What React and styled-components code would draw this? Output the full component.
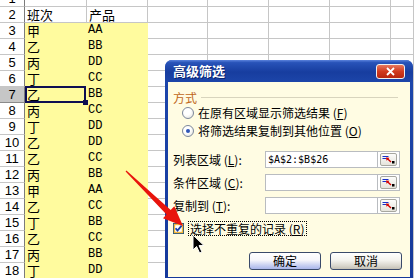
import styled, { createGlobalStyle } from "styled-components";

const GlobalStyle = createGlobalStyle`
	html, body {
		margin: 0;
		padding: 0;
		background: #fff;
		overflow: hidden;
	}
`;

const CJK = `"Noto Sans CJK SC", "Liberation Sans", sans-serif`;

const Page = styled.div`
	position: relative;
	width: 414px;
	height: 278px;
	overflow: hidden;
	background: #fff;
`;

const Sheet = styled.div`
	display: grid;
	grid-template-columns: 25px 62px 61px 60px 61px 61px 61px 1fr;
	grid-auto-rows: 16px;
	margin-top: -9px;
`;

const RowHead = styled.div`
	box-sizing: border-box;
	border-right: 1px solid #7b7b7b;
	border-bottom: 1px solid ${(p) => (p.$active ? "#8a8a8a" : "#c6c6c6")};
	background: ${(p) => (p.$active ? "#c6c6c6" : "#fff")};
	font: 13px/15px "Liberation Sans", sans-serif;
	text-align: center;
	color: #000;
`;

const Cell = styled.div`
	box-sizing: border-box;
	position: relative;
	overflow: visible;
	border-right: 1px solid ${(p) => (p.$fill ? "#fffb9e" : "#c6c6c6")};
	border-bottom: 1px solid ${(p) => (p.$fill ? "#fffb9e" : "#c6c6c6")};
	background: ${(p) => (p.$fill ? "#fffb9e" : "#fff")};
	padding-left: ${(p) => (p.$latin ? "1px" : "2px")};
	white-space: nowrap;
	color: #000;
	font: ${(p) =>
		p.$latin
			? `12px/15px "Liberation Mono", monospace`
			: `13px/15px ${CJK}`};

	${(p) =>
		p.$active &&
		`
		&::after {
			content: "";
			position: absolute;
			top: -1px;
			left: 0;
			right: 0;
			bottom: -1px;
			border: 2px solid #0e0e52;
		}
		&::before {
			content: "";
			position: absolute;
			right: -2px;
			bottom: -3px;
			width: 5px;
			height: 5px;
			background: #0e0e52;
			z-index: 1;
		}
	`}
`;

const Dialog = styled.div`
	position: absolute;
	left: 165px;
	top: 60px;
	width: 248px;
	height: 220px;
	box-sizing: border-box;
	display: flex;
	flex-direction: column;
	padding: 0 3px 3px;
	background: linear-gradient(#1d47ad, #15389a);
	border-radius: 7px 7px 0 0;
	z-index: 5;
`;

const TitleBar = styled.div`
	height: 22px;
	display: flex;
	align-items: center;
	justify-content: space-between;
	margin: 0 -3px;
	padding: 0 8px;
	border-radius: 7px 7px 0 0;
	background: linear-gradient(
		#5a82dc 0%,
		#2853b8 12%,
		#173d9f 55%,
		#1c45a9 100%
	);
`;

const Title = styled.span`
	font: bold 13px/16px ${CJK};
	color: #fff;
	text-shadow: 1px 1px 0 #0b2470;
`;

const CloseButton = styled.div`
	width: 29px;
	height: 15px;
	box-sizing: border-box;
	border: 1px solid #f0f0f0;
	border-radius: 3px;
	background: linear-gradient(#e8785e, #d13a1e 50%, #b8260f);
	display: flex;
	align-items: center;
	justify-content: center;
`;

const Body = styled.div`
	flex: 1;
	background: #fffce3;
	padding: 9px 0 0 5px;
	display: flex;
	flex-direction: column;
	font: 12px/14px ${CJK};
	color: #000;
`;

const GroupHead = styled.div`
	display: flex;
	align-items: center;
	height: 13px;
	padding-right: 12px;
	color: #c0661a;

	&::after {
		content: "";
		flex: 1;
		height: 1px;
		margin-left: 4px;
		background: #d8d4bd;
	}
`;

const RadioRow = styled.div`
	display: flex;
	align-items: center;
	gap: 4px;
	height: 18px;
	padding-left: 9px;
`;

const Radio = styled.span`
	width: 12px;
	height: 12px;
	box-sizing: border-box;
	border-radius: 50%;
	border: 1px solid #7c879b;
	background: radial-gradient(circle at 40% 35%, #fff 40%, #dcdcd4 100%);
	display: flex;
	align-items: center;
	justify-content: center;

	&::after {
		content: "";
		width: 4px;
		height: 4px;
		border-radius: 50%;
		background: ${(p) => (p.$checked ? "#2f55b6" : "transparent")};
	}
`;

const Fields = styled.div`
	display: flex;
	flex-direction: column;
	gap: 6px;
	margin-top: 11px;
`;

const FieldRow = styled.div`
	display: flex;
	align-items: center;
	height: 17px;
`;

const FieldLabel = styled.span`
	width: 92px;
	white-space: nowrap;
`;

const Input = styled.div`
	width: 113px;
	height: 17px;
	box-sizing: border-box;
	border: 1px solid #b9bcc0;
	background: #fff;
	padding-left: 2px;
	font: 10px/15px "DejaVu Sans Mono", monospace;
`;

const RefButton = styled.div`
	width: 22px;
	height: 17px;
	box-sizing: border-box;
	border: 1px solid #b9bcc0;
	border-left: none;
	background: #fff;
	display: flex;
	align-items: center;
	justify-content: center;

	& > span {
		width: 17px;
		height: 13px;
		box-sizing: border-box;
		border: 1px solid #a7a79f;
		border-radius: 2px;
		background: linear-gradient(#fdfdfb, #e6e4dc);
		display: flex;
		align-items: center;
		justify-content: center;
	}
`;

const CheckRow = styled.div`
	display: flex;
	align-items: center;
	gap: 4px;
	height: 16px;
	margin-top: 6px;
`;

const CheckLabel = styled.span`
	border: 1px dotted #000;
	padding: 0 2px 0 1px;
	line-height: 13px;
	white-space: nowrap;
`;

const Buttons = styled.div`
	display: flex;
	justify-content: flex-end;
	gap: 9px;
	margin-top: 16px;
	padding-right: 8px;
`;

const Button = styled.div`
	width: 72px;
	height: 18px;
	box-sizing: border-box;
	border: 1px solid #3a4a6a;
	border-radius: 3px;
	display: flex;
	align-items: center;
	justify-content: center;
	background: ${(p) =>
		p.$default
			? "linear-gradient(#ffffff 0%, #f6f6fb 45%, #c3ccf0 80%, #aab6ea 100%)"
			: "linear-gradient(#ffffff 0%, #f4f3ee 45%, #d8d5cc 80%, #c4c0b5 100%)"};
`;

const Overlay = styled.svg`
	position: absolute;
	left: 0;
	top: 0;
	z-index: 10;
	pointer-events: none;
`;

const rows = [
	[1, "", ""],
	[2, "班次", "产品"],
	[3, "甲", "AA"],
	[4, "乙", "BB"],
	[5, "丙", "DD"],
	[6, "丁", "CC"],
	[7, "乙", "BB"],
	[8, "丙", "CC"],
	[9, "丁", "DD"],
	[10, "乙", "DD"],
	[11, "乙", "CC"],
	[12, "丙", "BB"],
	[13, "甲", "AA"],
	[14, "乙", "CC"],
	[15, "丁", "BB"],
	[16, "乙", "CC"],
	[17, "丙", "BB"],
	[18, "丁", "DD"],
];

function Key({ k }) {
	return (
		<>
			{" "}(<u>{k}</u>)
		</>
	);
}

function RefIcon() {
	return (
		<svg width="13" height="9" viewBox="0 0 13 9">
			<path d="M0.5 1.5h6M0.5 3.5h4" stroke="#1a2fc8" strokeWidth="1.2" />
			<path d="M9 7L5.5 3.8" stroke="#d40000" strokeWidth="1.4" />
			<path d="M4 2.5L7.5 2.8L4.6 5.8Z" fill="#d40000" />
			<rect x="10" y="6" width="2.5" height="2.5" fill="#000" />
		</svg>
	);
}

function Spreadsheet() {
	return (
		<Sheet>
			{rows.map(([n, a, b]) => {
				const fill = n >= 3;
				return [
					<RowHead key={`h${n}`} $active={n === 7}>
						{n}
					</RowHead>,
					<Cell key={`a${n}`} $fill={fill} $active={n === 7}>
						{a}
					</Cell>,
					<Cell key={`b${n}`} $fill={fill} $latin={n >= 3}>
						{b}
					</Cell>,
					...[0, 1, 2, 3, 4].map((i) => <Cell key={`c${n}-${i}`} />),
				];
			})}
		</Sheet>
	);
}

function FilterDialog() {
	return (
		<Dialog>
			<TitleBar>
				<Title>高级筛选</Title>
				<CloseButton>
					<svg width="9" height="9" viewBox="0 0 9 9">
						<path d="M1 1L8 8M8 1L1 8" stroke="#fff" strokeWidth="1.8" />
					</svg>
				</CloseButton>
			</TitleBar>
			<Body>
				<GroupHead>方式</GroupHead>
				<RadioRow>
					<Radio />
					<span>
						在原有区域显示筛选结果<Key k="F" />
					</span>
				</RadioRow>
				<RadioRow>
					<Radio $checked />
					<span>
						将筛选结果复制到其他位置<Key k="O" />
					</span>
				</RadioRow>
				<Fields>
					<FieldRow>
						<FieldLabel>
							列表区域<Key k="L" />:
						</FieldLabel>
						<Input>$A$2:$B$26</Input>
						<RefButton>
							<span>
								<RefIcon />
							</span>
						</RefButton>
					</FieldRow>
					<FieldRow>
						<FieldLabel>
							条件区域<Key k="C" />:
						</FieldLabel>
						<Input />
						<RefButton>
							<span>
								<RefIcon />
							</span>
						</RefButton>
					</FieldRow>
					<FieldRow>
						<FieldLabel>
							复制到<Key k="T" />:
						</FieldLabel>
						<Input />
						<RefButton>
							<span>
								<RefIcon />
							</span>
						</RefButton>
					</FieldRow>
				</Fields>
				<CheckRow>
					<svg width="11" height="11" viewBox="0 0 11 11">
						<rect x="0.5" y="0.5" width="10" height="10" fill="#fff" stroke="#1c5180" />
						<rect x="1.5" y="1.5" width="8" height="8" fill="none" stroke="#f5b83a" strokeWidth="1.4" />
						<path d="M2.6 5.2L4.5 7.6L8.6 2.6" fill="none" stroke="#1b3ea8" strokeWidth="1.8" />
					</svg>
					<CheckLabel>
						选择不重复的记录<Key k="R" />
					</CheckLabel>
				</CheckRow>
				<Buttons>
					<Button $default>确定</Button>
					<Button>取消</Button>
				</Buttons>
			</Body>
		</Dialog>
	);
}

export default function App() {
	return (
		<>
			<GlobalStyle />
			<Page>
				<Spreadsheet />
				<FilterDialog />
				<Overlay width="414" height="278" viewBox="0 0 414 278">
					<polygon
						points="126.4,170.6 170.7,210 174.3,206.2 183,226 163,218.2 166.5,214.4 125.6,171.4"
						fill="#e8140c"
					/>
					<path
						d="M193 235L193 250L196.6 246.5L199.6 253L202 252L199 245.6L204 245.6Z"
						fill="#000"
						stroke="#fff"
						strokeWidth="1"
					/>
				</Overlay>
			</Page>
		</>
	);
}
